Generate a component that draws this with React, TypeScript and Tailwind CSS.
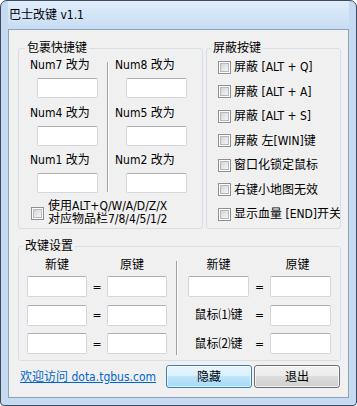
const font = "font-['DejaVu_Sans_Condensed','Liberation_Sans','Noto_Sans_CJK_SC',sans-serif]"

function TextBox({ className = '' }: { className?: string }) {
  return (
    <div
      className={`h-[20px] rounded-[2px] border border-[#d3d6da] border-t-[#abadb3] bg-white ${className}`}
    />
  )
}

function Check() {
  return (
    <span className="flex h-[13px] w-[13px] shrink-0 items-center justify-center border border-[#8f8f8f] bg-white">
      <span className="h-[9px] w-[9px] border border-[#b5b9be] bg-[linear-gradient(135deg,#d2d4d8,#f7f7f7)]" />
    </span>
  )
}

function Etched({ className = '' }: { className?: string }) {
  return (
    <div
      className={`w-[2px] shrink-0 border-l border-r border-l-[#a0a0a0] border-r-white ${className}`}
    />
  )
}

const blockKeys = [
  '屏蔽 [ALT + Q]',
  '屏蔽 [ALT + A]',
  '屏蔽 [ALT + S]',
  '屏蔽 左[WIN]键',
  '窗口化锁定鼠标',
  '右键小地图无效',
  '显示血量 [END]开关',
]

function NumColumn({ keys, labelPad, boxPad }: { keys: string[]; labelPad: string; boxPad: string }) {
  return (
    <div className="flex flex-col gap-[6.5px]">
      {keys.map((k) => (
        <div key={k} className="flex flex-col">
          <div className={`leading-[16px] whitespace-nowrap ${labelPad}`}>{k} 改为</div>
          <TextBox className={`mt-[5px] w-[61px] ${boxPad}`} />
        </div>
      ))}
    </div>
  )
}

export default function App() {
  return (
    <div className={`${font} h-[406px] w-[357px] text-[12px] text-black`}>
      <div className="flex h-full w-full flex-col rounded-t-[7px] rounded-b-[4px] border border-[#3d4b5c] bg-[#c6dbf2] px-[7px] pb-[7px]">
        {/* title bar */}
        <div className="flex h-[28px] shrink-0 items-center bg-[linear-gradient(#e0edfb,#c8dcf3)] pl-[1px] leading-[16px]">
          巴士改键 v1.1
        </div>

        {/* client area */}
        <div className="flex flex-1 flex-col border border-[#8ea3bb] bg-[#f0f0f0] pl-[9px] pr-[7px] pt-[10px]">
          <div className="flex gap-[3px]">
            {/* 包裹快捷键 */}
            <fieldset className="h-[189px] w-[185px] shrink-0 rounded-[3px] border border-[#d5dfe5]">
              <legend className="ml-[6px] px-[2px] leading-[16px]">包裹快捷键</legend>
              <div className="flex pt-[1px]">
                <div className="w-[88px] shrink-0">
                  <NumColumn keys={['Num7', 'Num4', 'Num1']} labelPad="pl-[11px]" boxPad="ml-[18px]" />
                </div>
                <Etched className="mt-[5px] h-[130px]" />
                <NumColumn keys={['Num8', 'Num5', 'Num2']} labelPad="pl-[6px]" boxPad="ml-[17px]" />
              </div>
              <div className="mt-[7px] flex items-center gap-[4px] pl-[12px]">
                <Check />
                <div className="leading-[13px] whitespace-nowrap">
                  使用ALT+Q/W/A/D/Z/X
                  <br />
                  对应物品栏7/8/4/5/1/2
                </div>
              </div>
            </fieldset>

            {/* 屏蔽按键 */}
            <fieldset className="h-[189px] min-w-0 flex-1 rounded-[3px] border border-[#d5dfe5]">
              <legend className="ml-[4px] px-[2px] leading-[16px]">屏蔽按键</legend>
              <div className="flex w-full flex-col gap-[8.5px] overflow-hidden pl-[11px] pt-[3px]">
                {blockKeys.map((t) => (
                  <div key={t} className="flex h-[16px] items-center gap-[3px] whitespace-nowrap">
                    <Check />
                    <span className="leading-[16px]">{t}</span>
                  </div>
                ))}
              </div>
            </fieldset>
          </div>

          {/* 改键设置 */}
          <fieldset className="mt-[9px] h-[123px] rounded-[3px] border border-[#d5dfe5]">
            <legend className="ml-[4px] px-[2px] leading-[16px]">改键设置</legend>
            <div className="flex pl-[8px] pt-[3px]">
              <div className="grid w-[140px] shrink-0 grid-cols-[60px_20px_60px] gap-y-[7px]">
                <div className="text-center leading-[16px]">新键</div>
                <div />
                <div className="pr-[10px] text-center leading-[16px]">原键</div>
                {[0, 1, 2].map((i) => (
                  <div key={i} className="contents">
                    <TextBox className={`h-[21px] ${i === 0 ? '-mt-[5px]' : ''}`} />
                    <div className={`flex items-center justify-center ${i === 0 ? '-mt-[5px]' : ''}`}>=</div>
                    <TextBox className={`h-[21px] ${i === 0 ? '-mt-[5px]' : ''}`} />
                  </div>
                ))}
              </div>
              <Etched className="ml-[9px] mt-[4px] h-[94px]" />
              <div className="ml-[10px] grid w-[143px] shrink-0 grid-cols-[61px_21px_61px] gap-y-[7px]">
                <div className="text-center leading-[16px]">新键</div>
                <div />
                <div className="pr-[6px] text-center leading-[16px]">原键</div>
                <TextBox className="-mt-[5px] h-[21px]" />
                <div className="-mt-[5px] flex items-center justify-center">=</div>
                <TextBox className="-mt-[5px] h-[21px]" />
                <div className="flex h-[21px] items-center justify-center whitespace-nowrap">鼠标⑴键</div>
                <div className="flex items-center justify-center">=</div>
                <TextBox className="h-[21px]" />
                <div className="flex h-[21px] items-center justify-center whitespace-nowrap">鼠标⑵键</div>
                <div className="flex items-center justify-center">=</div>
                <TextBox className="h-[21px]" />
              </div>
            </div>
          </fieldset>

          {/* bottom row */}
          <div className="mt-[4px] flex items-center pr-[1px]">
            <a href="#" className="ml-[2px] leading-[16px] whitespace-nowrap text-[#0066cc] underline">
              欢迎访问 dota.tgbus.com
            </a>
            <div className="ml-auto flex gap-[2px]">
              <button className="flex h-[23px] w-[86px] items-center justify-center rounded-[3px] border border-[#3c7fb1] bg-[linear-gradient(#eaf6fd_0%,#d9f0fc_50%,#bee6fd_50%,#a7d9f5_100%)] shadow-[inset_0_0_0_1px_rgba(255,255,255,0.6)]">
                隐藏
              </button>
              <button className="flex h-[23px] w-[86px] items-center justify-center rounded-[3px] border border-[#707070] bg-[linear-gradient(#f2f2f2_0%,#ebebeb_50%,#dddddd_50%,#cfcfcf_100%)] shadow-[inset_0_0_0_1px_rgba(255,255,255,0.7)]">
                退出
              </button>
            </div>
          </div>
        </div>
      </div>
    </div>
  )
}
